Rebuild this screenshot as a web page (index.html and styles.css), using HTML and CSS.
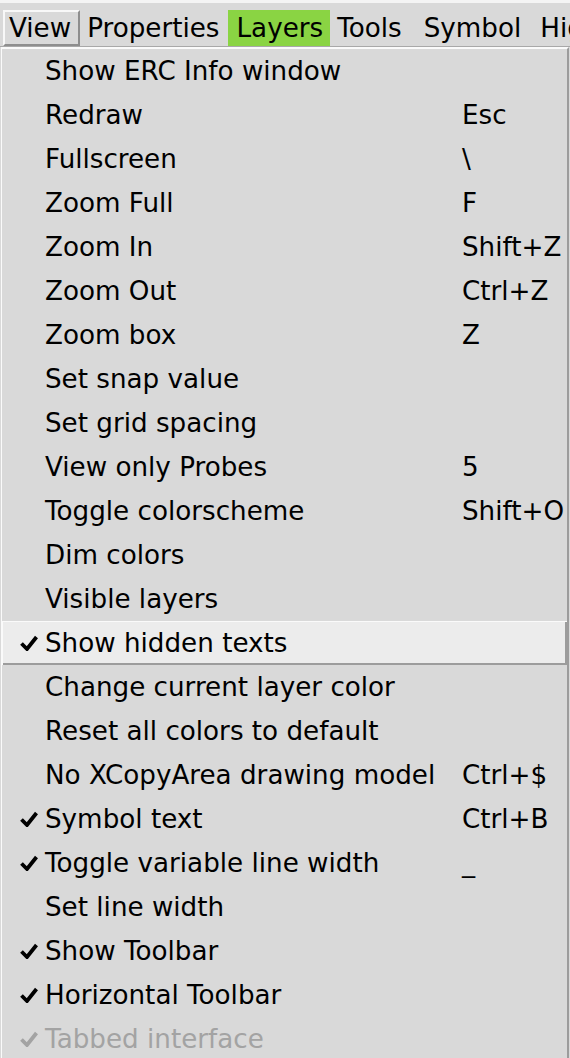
FILE: index.html
```html
<!DOCTYPE html>
<html>
<head>
<meta charset="utf-8">
<link rel="stylesheet" href="styles.css">
</head>
<body>
<div class="menubar">
  <div class="mb-item raised">View</div>
  <div class="mb-item">Properties</div>
  <div class="mb-item green">Layers</div>
  <div class="mb-item">Tools</div>
  <div class="mb-item wide">Symbol</div>
  <div class="mb-item wide2">Highlight</div>
</div>
<div class="menu">
  <div class="row"><span class="chk"></span><span class="lbl">Show ERC Info window</span><span class="acc"></span></div>
  <div class="row"><span class="chk"></span><span class="lbl">Redraw</span><span class="acc">Esc</span></div>
  <div class="row"><span class="chk"></span><span class="lbl">Fullscreen</span><span class="acc">\</span></div>
  <div class="row"><span class="chk"></span><span class="lbl">Zoom Full</span><span class="acc">F</span></div>
  <div class="row"><span class="chk"></span><span class="lbl">Zoom In</span><span class="acc">Shift+Z</span></div>
  <div class="row"><span class="chk"></span><span class="lbl">Zoom Out</span><span class="acc">Ctrl+Z</span></div>
  <div class="row"><span class="chk"></span><span class="lbl">Zoom box</span><span class="acc">Z</span></div>
  <div class="row"><span class="chk"></span><span class="lbl">Set snap value</span><span class="acc"></span></div>
  <div class="row"><span class="chk"></span><span class="lbl">Set grid spacing</span><span class="acc"></span></div>
  <div class="row"><span class="chk"></span><span class="lbl">View only Probes</span><span class="acc">5</span></div>
  <div class="row"><span class="chk"></span><span class="lbl">Toggle colorscheme</span><span class="acc">Shift+O</span></div>
  <div class="row"><span class="chk"></span><span class="lbl">Dim colors</span><span class="acc"></span></div>
  <div class="row"><span class="chk"></span><span class="lbl">Visible layers</span><span class="acc"></span></div>
  <div class="row active"><span class="chk"><svg class="tick" viewBox="0 0 18 16"><path d="M1.5 8.5 L7 14 L16.5 2"/></svg></span><span class="lbl">Show hidden texts</span><span class="acc"></span></div>
  <div class="row"><span class="chk"></span><span class="lbl">Change current layer color</span><span class="acc"></span></div>
  <div class="row"><span class="chk"></span><span class="lbl">Reset all colors to default</span><span class="acc"></span></div>
  <div class="row"><span class="chk"></span><span class="lbl">No XCopyArea drawing model</span><span class="acc">Ctrl+$</span></div>
  <div class="row"><span class="chk"><svg class="tick" viewBox="0 0 18 16"><path d="M1.5 8.5 L7 14 L16.5 2"/></svg></span><span class="lbl">Symbol text</span><span class="acc">Ctrl+B</span></div>
  <div class="row"><span class="chk"><svg class="tick" viewBox="0 0 18 16"><path d="M1.5 8.5 L7 14 L16.5 2"/></svg></span><span class="lbl">Toggle variable line width</span><span class="acc">_</span></div>
  <div class="row"><span class="chk"></span><span class="lbl">Set line width</span><span class="acc"></span></div>
  <div class="row"><span class="chk"><svg class="tick" viewBox="0 0 18 16"><path d="M1.5 8.5 L7 14 L16.5 2"/></svg></span><span class="lbl">Show Toolbar</span><span class="acc"></span></div>
  <div class="row"><span class="chk"><svg class="tick" viewBox="0 0 18 16"><path d="M1.5 8.5 L7 14 L16.5 2"/></svg></span><span class="lbl">Horizontal Toolbar</span><span class="acc"></span></div>
  <div class="row disabled"><span class="chk"><svg class="tick" viewBox="0 0 18 16"><path d="M1.5 8.5 L7 14 L16.5 2"/></svg></span><span class="lbl">Tabbed interface</span><span class="acc"></span></div>
</div>
</body>
</html>
```

FILE: styles.css
```css
html, body {
  margin: 0;
  padding: 0;
  background: #d9d9d9;
  overflow: hidden;
}

body {
  width: 570px;
  height: 1058px;
  font-family: "DejaVu Sans", sans-serif;
  font-size: 26.2px;
  color: #000;
}

.menubar {
  box-sizing: border-box;
  height: 47px;
  border-top: 3px solid #f4f4f4;
  border-bottom: 1px solid #a8a8a8;
  padding: 7px 0 0 3px;
  display: flex;
  white-space: nowrap;
  overflow: hidden;
}

.mb-item {
  box-sizing: border-box;
  height: 36px;
  line-height: 32px;
  padding: 0 6px 0 5px;
  border: 2px solid transparent;
  flex: none;
}

.mb-item.raised {
  border-color: #f8f8f8 #8e8e8e #8e8e8e #f8f8f8;
  padding-left: 4px;
  padding-right: 7px;
}

.mb-item.green {
  background: #8ad443;
  border-color: #8ad443;
  padding: 0 5px 0 7px;
}

.mb-item.wide {
  margin-left: 7px;
}

.mb-item.wide2 {
  margin-left: 4px;
}

.menu {
  box-sizing: border-box;
  width: 568px;
  margin-left: 1px;
  border-top: 2px solid #fafafa;
  border-left: 1px solid #fafafa;
  border-right: 2px solid #9c9c9c;
  height: 1011px;
  overflow: hidden;
}

.row {
  height: 44px;
  display: grid;
  grid-template-columns: 43px 417px 1fr;
  align-items: center;
  white-space: nowrap;
}

.row.active {
  background: #ececec;
  box-shadow: inset 1px 1px 0 #fafafa, inset 0 -2px 0 #9c9c9c, inset -2px 0 0 #9c9c9c;
}

.row.disabled {
  color: #a3a3a3;
}

.chk {
  display: flex;
  align-items: center;
  height: 44px;
  padding-left: 18px;
}

.tick {
  width: 18px;
  height: 16px;
  fill: none;
  stroke: #000;
  stroke-width: 3.8;
  stroke-linejoin: miter;
  stroke-linecap: butt;
}

.disabled .tick {
  stroke: #a3a3a3;
}

.lbl, .acc {
  line-height: 44px;
}
```
